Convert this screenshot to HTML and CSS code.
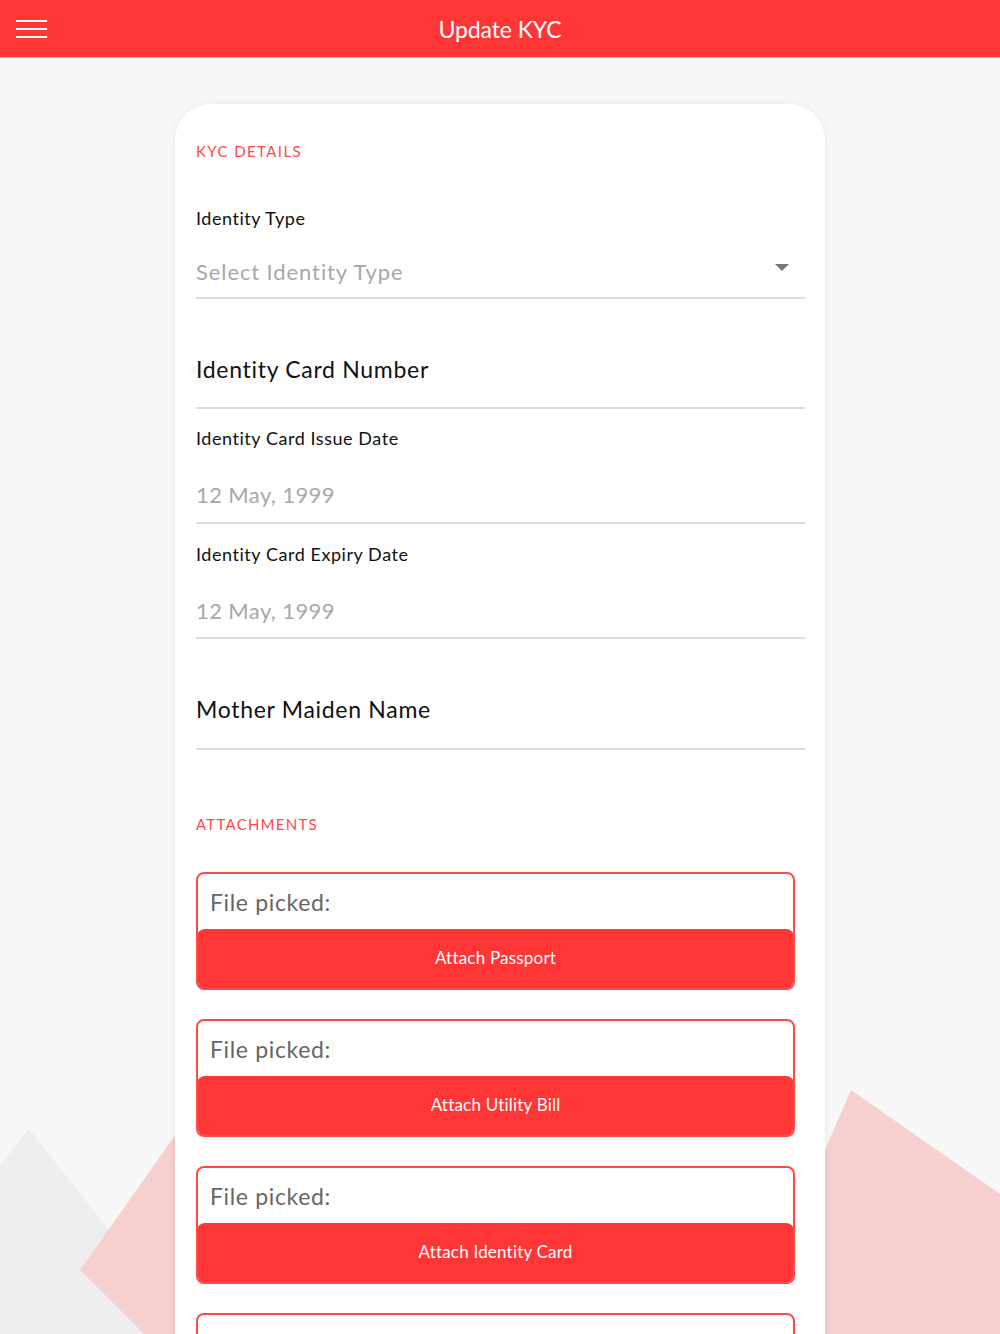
FILE: index.html
```html
<!DOCTYPE html>
<html lang="en">
<head>
<meta charset="utf-8">
<title>Update KYC</title>
<link rel="stylesheet" href="styles.css">
</head>
<body>
<header class="topbar">
  <button class="menu" aria-label="Menu"><span></span><span></span><span></span></button>
  <h1 class="title">Update KYC</h1>
</header>
<main class="stage">
  <svg class="deco" width="1000" height="1277" viewBox="0 57 1000 1277" aria-hidden="true">
    <polygon points="29,1129 260,1420 -100,1420 -60,1240" fill="#eeeeee"/>
    <polygon points="80,1270 200,1100 420,1300 260,1450" fill="#f6d0cf"/>
    <polygon points="851,1090 1080,1250 980,1450 760,1300" fill="#f6d0cf"/>
  </svg>
  <section class="card">
    <h2 class="section-title">KYC DETAILS</h2>
    <div class="field field-type">
      <label class="label">Identity Type</label>
      <div class="select">
        <span class="placeholder">Select Identity Type</span>
        <span class="caret"></span>
      </div>
    </div>
    <div class="field field-number">
      <div class="input-big">Identity Card Number</div>
    </div>
    <div class="field field-date">
      <label class="label">Identity Card Issue Date</label>
      <div class="date">12 May, 1999</div>
    </div>
    <div class="field field-date">
      <label class="label">Identity Card Expiry Date</label>
      <div class="date">12 May, 1999</div>
    </div>
    <div class="field field-number">
      <div class="input-big">Mother Maiden Name</div>
    </div>
    <h2 class="section-title attachments">ATTACHMENTS</h2>
    <div class="attach-list">
      <div class="attach">
        <div class="picked">File picked:</div>
        <button class="attach-btn">Attach Passport</button>
      </div>
      <div class="attach">
        <div class="picked">File picked:</div>
        <button class="attach-btn">Attach Utility Bill</button>
      </div>
      <div class="attach">
        <div class="picked">File picked:</div>
        <button class="attach-btn">Attach Identity Card</button>
      </div>
      <div class="attach">
        <div class="picked"></div>
      </div>
    </div>
  </section>
</main>
</body>
</html>
```

FILE: styles.css
```css
* { box-sizing: border-box; }
html, body {
  margin: 0;
  padding: 0;
  height: 1334px;
  overflow: hidden;
}
body {
  background: #f8f8f8;
  font-family: "Lato", "Open Sans", sans-serif;
  color: #111;
}
.topbar {
  height: 57px;
  background: #ff3636;
  display: flex;
  align-items: center;
  justify-content: center;
  position: relative;
  box-shadow: 0 1px 0 #f0b0b0;
}
.menu {
  position: absolute;
  left: 16px;
  top: 20px;
  width: 31px;
  height: 18px;
  padding: 0;
  border: 0;
  background: transparent;
  display: flex;
  flex-direction: column;
  justify-content: space-between;
}
.menu span {
  display: block;
  height: 2px;
  width: 31px;
  background: #fff;
}
.title {
  margin: 0;
  color: #fff;
  font-weight: 400;
  font-size: 23px;
  letter-spacing: -0.1px;
  line-height: 1;
  padding-top: 2px;
}
.stage {
  position: relative;
  height: 1277px;
  overflow: hidden;
}
.deco {
  position: absolute;
  left: 0;
  top: 0;
}
.card {
  position: relative;
  width: 650px;
  margin: 47px auto 0;
  background: #fff;
  border-radius: 36px 36px 0 0;
  box-shadow: 0 0 7px rgba(0,0,0,0.07);
  padding: 34px 20px 0 21px;
  min-height: 1300px;
}
.section-title {
  margin: 0;
  font-weight: 400;
  font-size: 15px;
  line-height: 26px;
  letter-spacing: 1.4px;
  color: #ff4a4a;
}
.field {
  border-bottom: 2px solid #dcdcdc;
}
.label {
  display: block;
  font-size: 18px;
  line-height: 24px;
  color: #111;
  letter-spacing: 0.55px;
}
.field-type { margin-top: 42px; padding-bottom: 10px; }
.select {
  margin-top: 27px;
  display: flex;
  align-items: center;
  justify-content: space-between;
  height: 30px;
}
.placeholder {
  font-size: 22px;
  line-height: 30px;
  color: #a8a8a8;
  letter-spacing: 0.9px;
}
.caret {
  width: 0;
  height: 0;
  border-left: 7px solid transparent;
  border-right: 7px solid transparent;
  border-top: 7px solid #777;
  margin-right: 16px;
  margin-top: -10px;
}
.field-number { margin-top: 55px; padding-bottom: 23px; }
.input-big {
  font-size: 23px;
  line-height: 30px;
  color: #111;
  letter-spacing: 0.7px;
}
.field-date { margin-top: 17px; padding-bottom: 12px; }
.date {
  margin-top: 30px;
  font-size: 22px;
  line-height: 30px;
  color: #a8a8a8;
  letter-spacing: 0.4px;
}
.field-number + .field-date + .field-date { margin-top: 18px; padding-bottom: 11px; }
.field-date + .field-number { padding-bottom: 24px; }
.attachments { margin-top: 61px; letter-spacing: 1.25px; }
.attach-list {
  margin-top: 35px;
  margin-right: 10px;
  display: flex;
  flex-direction: column;
  gap: 29px;
}
.attach {
  height: 118px;
  border: 2px solid #ff4a4a;
  border-radius: 8px;
  display: flex;
  flex-direction: column;
  overflow: hidden;
}
.picked {
  height: 55px;
  padding-left: 12px;
  display: flex;
  align-items: center;
  font-size: 23px;
  color: #666;
  letter-spacing: 0.65px;
}
.attach-btn {
  flex: 1;
  border: 0;
  margin: 0 -1px -1px;
  border-radius: 8px;
  background: #ff3636;
  color: #fff;
  font-family: inherit;
  font-size: 17px;
  letter-spacing: 0.2px;
  padding: 0 0 3px;
}
```
